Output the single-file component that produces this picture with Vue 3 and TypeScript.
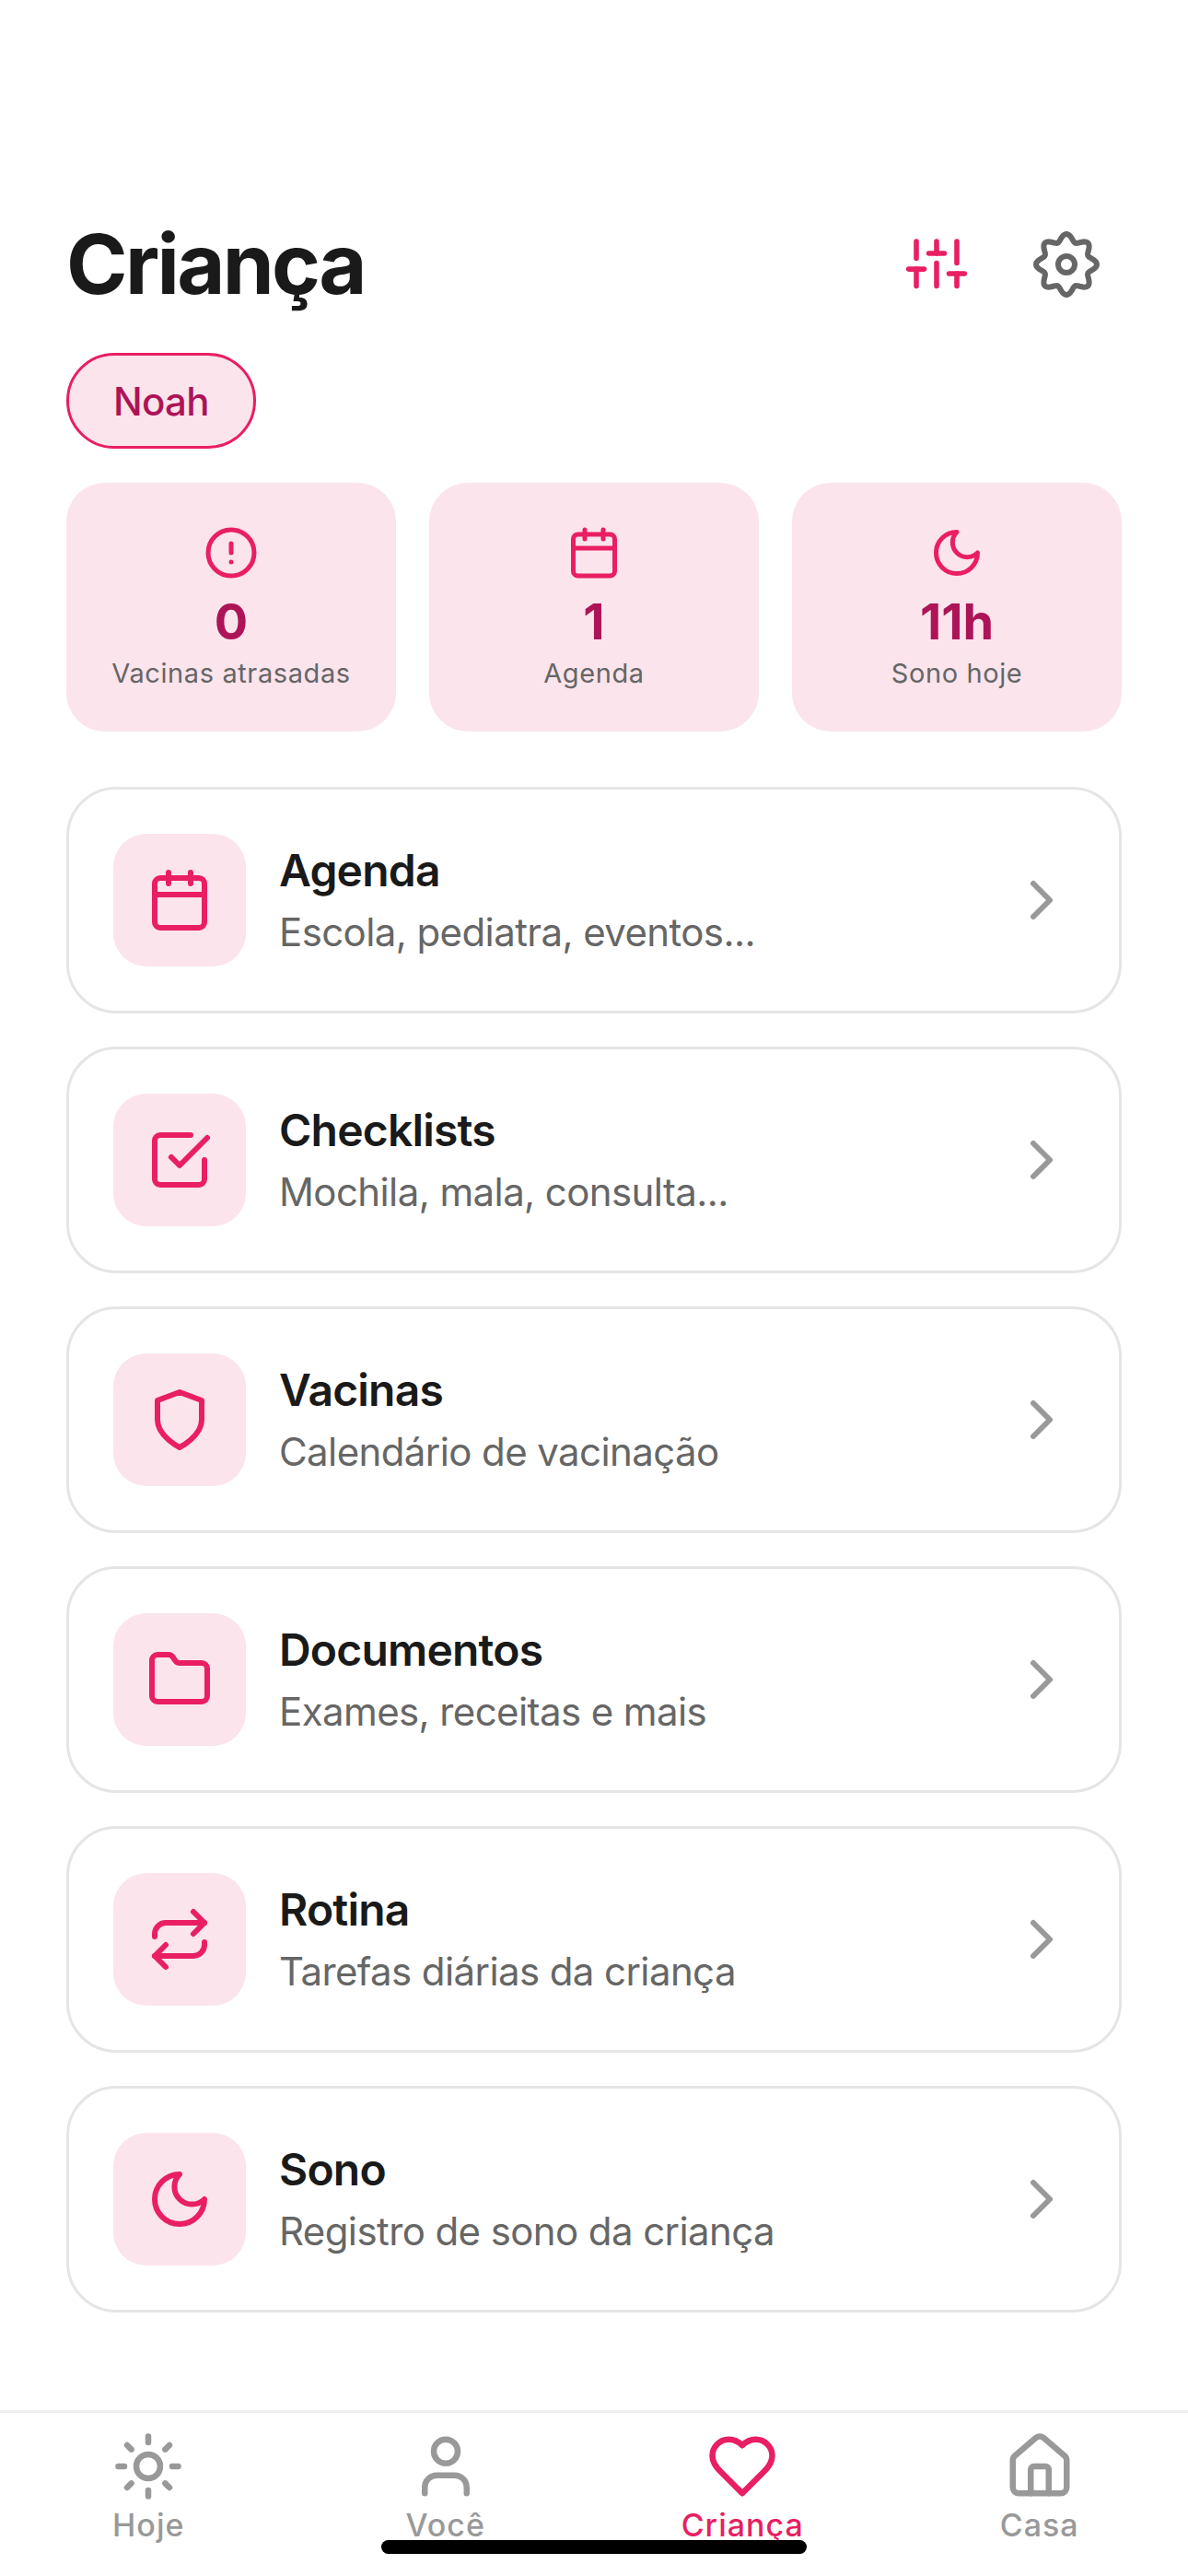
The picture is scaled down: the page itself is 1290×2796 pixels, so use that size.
<template>
  <div class="screen">
    <main class="content">
      <header class="header">
        <h1 class="title">Criança</h1>
        <div class="actions">
          <button class="icon-btn pink">
            <svg class="icon-72 thin" viewBox="0 0 24 24"><path v-for="d in icons.sliders" :key="d" :d="d" /></svg>
          </button>
          <button class="icon-btn dark">
            <svg class="icon-72" viewBox="0 0 24 24"><path v-for="d in icons.settings" :key="d" :d="d" /></svg>
          </button>
        </div>
      </header>

      <div class="chips">
        <span class="chip">Noah</span>
      </div>

      <section class="stats">
        <div v-for="s in stats" :key="s.label" class="stat">
          <svg class="stat-icon" viewBox="0 0 24 24"><path v-for="d in icons[s.icon]" :key="d" :d="d" /></svg>
          <strong class="stat-value">{{ s.value }}</strong>
          <span class="stat-label">{{ s.label }}</span>
        </div>
      </section>

      <section class="list">
        <a v-for="item in items" :key="item.title" class="row">
          <span class="row-icon">
            <svg class="icon-72" viewBox="0 0 24 24"><path v-for="d in icons[item.icon]" :key="d" :d="d" /></svg>
          </span>
          <span class="row-text">
            <span class="row-title">{{ item.title }}</span>
            <span class="row-sub">{{ item.sub }}</span>
          </span>
          <svg class="icon-72 chevron" viewBox="0 0 24 24"><path v-for="d in icons.chevron" :key="d" :d="d" /></svg>
        </a>
      </section>
    </main>

    <nav class="tabs">
      <div v-for="t in tabs" :key="t.label" class="tab" :class="{ active: t.active }">
        <svg class="tab-icon" viewBox="0 0 24 24"><path v-for="d in icons[t.icon]" :key="d" :d="d" /></svg>
        <span class="tab-label">{{ t.label }}</span>
      </div>
    </nav>
    <div class="home-indicator"></div>
  </div>
</template>

<script setup lang="ts">
const circle = (cx: number, cy: number, r: number) =>
  `M${cx - r} ${cy}a${r} ${r} 0 1 0 ${2 * r} 0a${r} ${r} 0 1 0 ${-2 * r} 0`;

// wavy 8-tooth outline, the gear in the header has no sharp corners
const gear = () => {
  const pts: string[] = [];
  for (let deg = 0; deg < 360; deg += 3) {
    const a = (deg * Math.PI) / 180;
    const r = 9.7 + 1.3 * Math.cos(8 * a);
    pts.push(`${(12 + r * Math.sin(a)).toFixed(2)} ${(12 - r * Math.cos(a)).toFixed(2)}`);
  }
  return `M${pts.join("L")}Z`;
};

const moon = "M12 3a6 6 0 0 0 9 9 9 9 0 1 1-9-9Z";

const icons: Record<string, string[]> = {
  sliders: [
    "M4.67 3.7v6.1", "M4.67 13.7v6.1", "M12 3.7V8", "M12 11.5v8.3", "M19.33 3.7v7.8", "M19.33 15.3v4.5",
    "M1.9 13.7h5.6", "M9.2 8h5.6", "M16.5 15.3h5.6",
  ],
  settings: [gear(), circle(12, 12, 3)],
  alert: [circle(12, 12, 10), "M12 8v4", "M12 16h.01"],
  calendar: ["M8 2v4", "M16 2v4", "M5 4h14a2 2 0 0 1 2 2v14a2 2 0 0 1-2 2H5a2 2 0 0 1-2-2V6a2 2 0 0 1 2-2z", "M3 10h18"],
  moon: [moon],
  check: ["m9 11 3 3L22 4", "M21 12v7a2 2 0 0 1-2 2H5a2 2 0 0 1-2-2V5a2 2 0 0 1 2-2h11"],
  shield: ["M12 22s8-4 8-10V5l-8-3-8 3v7c0 6 8 10 8 10z"],
  folder: ["M20 20a2 2 0 0 0 2-2V8a2 2 0 0 0-2-2h-7.9a2 2 0 0 1-1.69-.9L9.6 3.9A2 2 0 0 0 7.93 3H4a2 2 0 0 0-2 2v13a2 2 0 0 0 2 2Z"],
  repeat: ["m17 2 4 4-4 4", "M3 11v-1a4 4 0 0 1 4-4h14", "m7 22-4-4 4-4", "M21 13v1a4 4 0 0 1-4 4H3"],
  chevron: ["m9 18 6-6-6-6"],
  sun: [
    circle(12, 12, 4), "M12 2v2", "M12 20v2", "m4.93 4.93 1.41 1.41", "m17.66 17.66 1.41 1.41",
    "M2 12h2", "M20 12h2", "m6.34 17.66-1.41 1.41", "m19.07 4.93-1.41 1.41",
  ],
  user: ["M19 21v-2a4 4 0 0 0-4-4H9a4 4 0 0 0-4 4v2", circle(12, 7, 4)],
  heart: ["M19 14c1.49-1.46 3-3.21 3-5.5A5.5 5.5 0 0 0 16.5 3c-1.76 0-3 .5-4.5 2-1.5-1.5-2.74-2-4.5-2A5.5 5.5 0 0 0 2 8.5c0 2.3 1.5 4.05 3 5.5l7 7Z"],
  home: [
    "M15 21v-8a1 1 0 0 0-1-1h-4a1 1 0 0 0-1 1v8",
    "M3 10a2 2 0 0 1 .709-1.528l7-5.999a2 2 0 0 1 2.582 0l7 5.999A2 2 0 0 1 21 10v9a2 2 0 0 1-2 2H5a2 2 0 0 1-2-2z",
  ],
};

const stats = [
  { icon: "alert", value: "0", label: "Vacinas atrasadas" },
  { icon: "calendar", value: "1", label: "Agenda" },
  { icon: "moon", value: "11h", label: "Sono hoje" },
];

const items = [
  { icon: "calendar", title: "Agenda", sub: "Escola, pediatra, eventos..." },
  { icon: "check", title: "Checklists", sub: "Mochila, mala, consulta..." },
  { icon: "shield", title: "Vacinas", sub: "Calendário de vacinação" },
  { icon: "folder", title: "Documentos", sub: "Exames, receitas e mais" },
  { icon: "repeat", title: "Rotina", sub: "Tarefas diárias da criança" },
  { icon: "moon", title: "Sono", sub: "Registro de sono da criança" },
];

const tabs = [
  { icon: "sun", label: "Hoje", active: false },
  { icon: "user", label: "Você", active: false },
  { icon: "heart", label: "Criança", active: true },
  { icon: "home", label: "Casa", active: false },
];
</script>

<style>
body {
  background: #fff;
}
</style>

<style scoped>
.screen {
  position: relative;
  display: flex;
  flex-direction: column;
  justify-content: space-between;
  width: 1290px;
  height: 2796px;
  overflow: hidden;
  background: #fff;
  font-family: Inter, "Noto Sans", sans-serif;
}

svg {
  display: block;
  fill: none;
  stroke: currentColor;
  stroke-width: 2;
  stroke-linecap: round;
  stroke-linejoin: round;
}

.content {
  padding: 225px 72px 0;
}

.header {
  display: flex;
  align-items: center;
  justify-content: space-between;
  height: 120px;
}

.title {
  margin: 4px 0 0;
  font-size: 90px;
  font-weight: 700;
  line-height: 116px;
  letter-spacing: -2.7px;
  color: #1a1a1a;
}

.actions {
  display: flex;
  gap: 21px;
  margin-top: 4px;
}

.icon-btn {
  display: flex;
  align-items: center;
  justify-content: center;
  width: 120px;
  height: 116px;
  padding: 0;
  border: 0;
  background: none;
}

.pink {
  color: #e91e63;
}

.dark {
  color: #666;
}

.icon-72 {
  width: 72px;
  height: 72px;
}

.thin {
  stroke-width: 1.85;
}

.chips {
  display: flex;
  margin-top: 38px;
}

.chip {
  display: flex;
  align-items: center;
  height: 104px;
  box-sizing: border-box;
  padding: 0 48px;
  border: 3px solid #e91e63;
  border-radius: 60px;
  background: #fbe4ec;
  color: #ad1457;
  font-size: 42px;
  font-weight: 500;
  letter-spacing: -0.75px;
}

.stats {
  display: grid;
  grid-template-columns: repeat(3, 1fr);
  gap: 36px;
  margin-top: 37px;
}

.stat {
  display: flex;
  flex-direction: column;
  align-items: center;
  height: 270px;
  box-sizing: border-box;
  padding-top: 46px;
  border-radius: 42px;
  background: #fbe4ec;
}

.stat-icon {
  width: 60px;
  height: 60px;
  color: #e91e63;
}

.stat-value {
  margin-top: 12px;
  font-size: 54px;
  font-weight: 700;
  line-height: 66px;
  color: #ad1457;
}

.stat-label {
  margin-top: 5px;
  font-size: 29px;
  line-height: 36px;
  letter-spacing: 0.6px;
  color: #666;
}

.list {
  display: flex;
  flex-direction: column;
  gap: 36px;
  margin-top: 60px;
}

.row {
  display: flex;
  align-items: center;
  gap: 36px;
  padding: 48px;
  border: 3px solid #e5e5e5;
  border-radius: 54px;
  background: #fff;
}

.row-icon {
  display: flex;
  align-items: center;
  justify-content: center;
  width: 144px;
  height: 144px;
  border-radius: 36px;
  background: #fbe4ec;
  color: #e91e63;
}

.row-text {
  display: flex;
  flex: 1;
  flex-direction: column;
  gap: 10px;
}

.row-title {
  font-size: 48px;
  font-weight: 600;
  line-height: 60px;
  letter-spacing: -0.8px;
  color: #1a1a1a;
}

.row-sub {
  font-size: 42px;
  line-height: 54px;
  letter-spacing: -0.6px;
  color: #666;
}

.chevron {
  color: #999;
}

.tabs {
  display: grid;
  grid-template-columns: repeat(4, 1fr);
  box-sizing: border-box;
  height: 180px;
  border-top: 3px solid #f0f0f0;
}

.tab {
  display: flex;
  flex-direction: column;
  align-items: center;
  padding-top: 19px;
  color: #999;
}

.tab.active {
  color: #e91e63;
}

.tab-icon {
  width: 78px;
  height: 78px;
}

.tab-label {
  margin-top: 4px;
  font-size: 34px;
  font-weight: 500;
  line-height: 42px;
  letter-spacing: 1px;
}

.home-indicator {
  position: absolute;
  left: 414px;
  bottom: 24px;
  width: 462px;
  height: 15px;
  border-radius: 8px;
  background: #000;
}
</style>
